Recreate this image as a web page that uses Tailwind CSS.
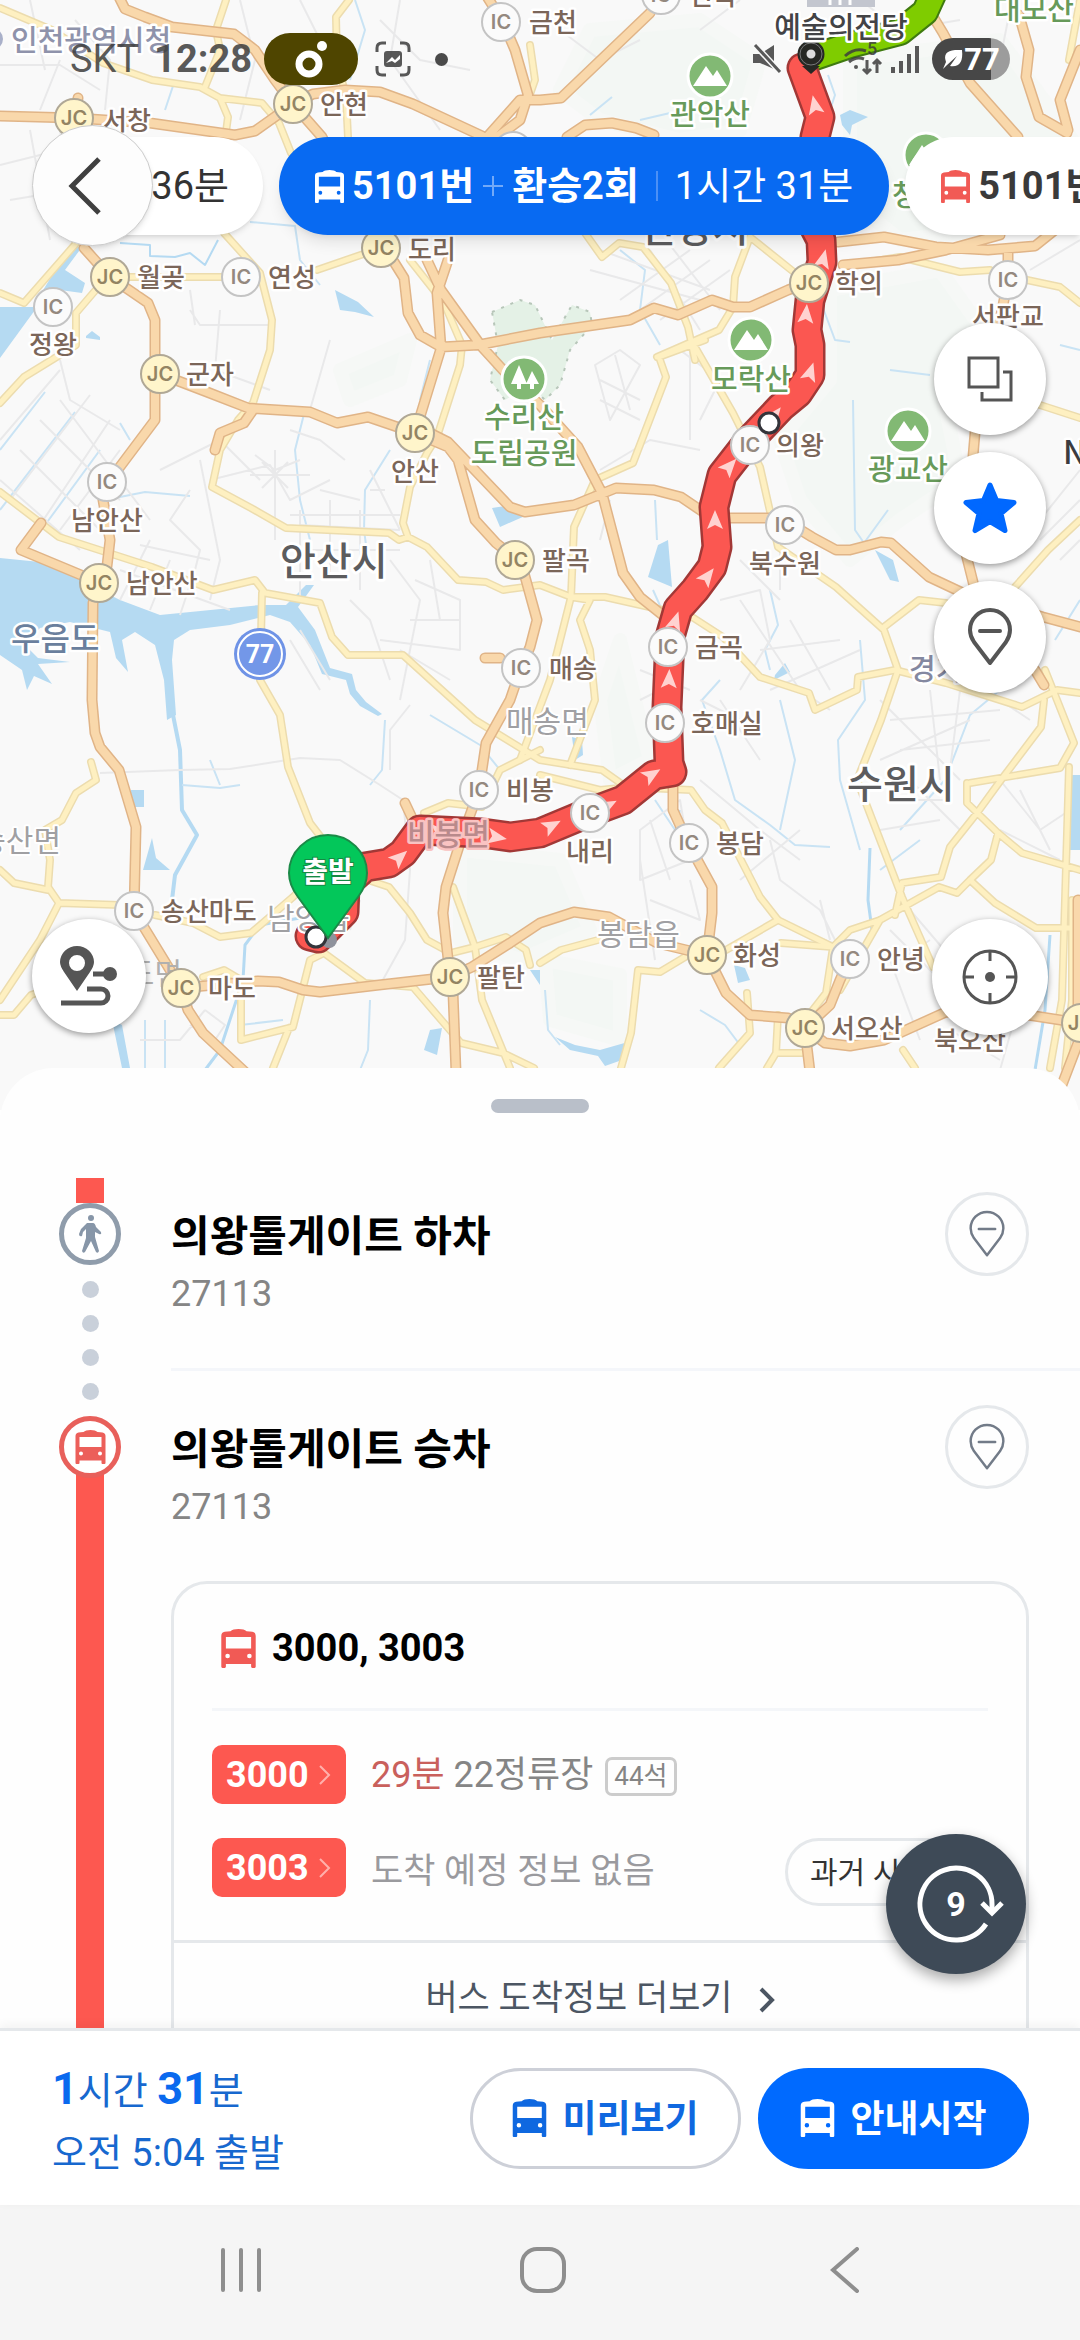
<!DOCTYPE html>
<html lang="ko">
<head>
    <meta charset="UTF-8">
    <meta name="viewport" content="width=device-width, initial-scale=1.0">
    <title>대중교통 길찾기</title>
    <!-- Tailwind CSS -->
    <script src="https://cdn.jsdelivr.net/npm/@tailwindcss/browser@4"></script>
</head>
<body class="h-screen flex flex-col overflow-hidden bg-white text-black font-[Roboto,'Noto_Sans_CJK_KR',sans-serif]">

<!-- Shared icons -->
<svg class="hidden">
    <symbol id="bus" viewBox="0 0 30 34">
        <path fill-rule="evenodd" d="M3 2.500Q5 2 8 2Q10 0 15 0T22 2Q25 2 27 2.500Q30 3 30 6V33Q30 34 29 34H27Q26 34 26 33V30.500H4V33Q4 34 3 34H1Q0 34 0 33V6Q0 3 3 2.500ZM4 7V17H26V7ZM5.500 21.500A2 2 0 1 0 5.500 25.500A2 2 0 1 0 5.500 21.500ZM24.500 21.500A2 2 0 1 0 24.500 25.500A2 2 0 1 0 24.500 21.500Z"/>
    </symbol>
    <symbol id="pin" viewBox="0 0 44 58">
        <path d="M22 55L6 34Q2 28 2 22A20 20 0 0 1 42 22Q42 28 38 34ZM12 23H32" fill="none" stroke="currentColor" stroke-linecap="round" stroke-linejoin="round"/>
    </symbol>
</svg>

<!-- Map -->
<header class="relative shrink-0">
    <svg class="block w-full" viewBox="0 0 1080 1110" font-family="'Noto Sans CJK KR', sans-serif">
        <defs>
            <g id="ic"><circle r="19" fill="#fbfbfb" stroke="#c4c4c4" stroke-width="2"/><text y="7" text-anchor="middle" font-family="Inter, sans-serif" font-size="20" font-weight="600" fill="#94897f">IC</text></g>
            <g id="jc"><circle r="19" fill="#fff5cb" stroke="#b0a896" stroke-width="2"/><text y="7" text-anchor="middle" font-family="Inter, sans-serif" font-size="20" font-weight="600" fill="#938463">JC</text></g>
            <g id="mt"><circle r="22" fill="#82b974" stroke="#fff" stroke-width="3"/><path d="M-17 10L-4 -10L3 0L7 -6L17 10Z" fill="#fff"/></g>
            <path id="ar" d="M0 -11L8 8L0 4L-8 8Z" fill="#ffd2d0"/>
        </defs>
        <rect width="1080" height="1110" fill="#f9f9f9"/>

        <!-- Hills -->
        <g fill="#f3f7f4" stroke="#f6f8f6" stroke-width="14" stroke-linejoin="round">
            <path d="M590 30L700 20L760 60L740 130L680 140L600 120L560 90ZM850 60L1000 40L1080 150V220L900 240L850 200ZM830 290L940 270L990 340L940 380L960 480L900 520L850 560L800 500L780 440L830 380ZM620 640L650 760L610 780L600 700ZM340 370L410 340L400 380L350 400ZM460 850L560 860L590 930L520 960L460 940ZM545 960L620 975L620 1040L550 1020Z"/>
        </g>
        <path d="M492 312L520 300L535 305L552 340L572 305L590 312L592 325L570 350L560 385L545 400L530 385L505 400L490 380L498 345Z" fill="#e4f1e6" stroke="#b7c6b9" stroke-width="2" stroke-dasharray="3 7"/>

        <!-- Water -->
        <g fill="#b5daf2">
            <path d="M0 307H33L69 247H82L65 270L85 283L82 293L60 290L35 310L0 358Z"/>
            <path d="M0 558L40 562L80 580L120 600L160 615L260 605L286 605L306 585H314L298 607L315 630L330 668L352 674L356 690L366 702L382 714L378 716L360 706L350 694L346 680L322 674L310 645L290 622L270 615L230 625L190 630L174 640L172 660L176 715L167 720L164 680L155 645L135 632L122 640L128 672L116 658L110 632L70 622L40 628L25 645L38 658L70 662L38 664L52 684L34 676L27 690L22 670L0 655Z"/>
            <path d="M335 290L358 302L374 317L355 312L340 310ZM840 115L850 110L868 117L852 125L850 135L842 125ZM492 508L512 505L525 516L500 527ZM658 545L668 540L672 587L648 577ZM875 550L893 560L899 582L890 580ZM775 675L785 663L790 672L774 680ZM1070 775H1080V850H1070ZM734 965L745 968L750 980L738 983ZM572 737L582 740L583 755L575 760ZM555 1037L575 1045L600 1050L628 1042L622 1060L605 1066L598 1056L570 1050ZM131 790H144V807H131ZM143 870L152 838L156 858L170 870ZM430 1030L442 1028L437 1055L424 1050ZM86 336L92 331L100 337V340L86 338ZM530 970H540V985ZM112 1020L122 1025L130 1068H122Z"/>
        </g>
        <g fill="none" stroke="#b5daf2" stroke-width="4" stroke-linejoin="round">
            <path d="M170 700L180 750L182 810L197 835L175 875L172 900"/>
            <path d="M300 918L260 925L245 945L243 980L220 1050L205 1070" stroke-width="3"/>
            <path d="M120 243L150 245V256L175 257L190 253L205 265L218 240" stroke-width="2"/>
            <path d="M870 848L868 900L872 930L860 960" stroke-width="3"/>
            <path d="M1050 935L1045 1010L1035 1070" stroke-width="3"/>
        </g>
        <g fill="none" stroke="#c9e3f4" stroke-width="1" stroke-linejoin="round">
            <path d="M355 0L365 30L350 80M175 80L165 110M250 222L295 226L300 260L320 285M45 392L0 450M75 412L0 510M100 450L45 525M120 423L130 440M105 500L145 492L190 496M430 360L420 400M305 410L295 450L300 500L310 540M390 450L365 490L364 530L368 560M620 250L645 270L640 310L660 345M828 75L835 95L830 110M640 120L670 113M590 115L612 97M820 300L835 340L850 342M853 400L855 530L864 543M655 500L657 540M653 590L662 610M770 590L778 625L765 650L770 670M864 543L888 510M720 680L702 700L720 750L735 800L770 825L795 845L830 847M860 640L865 700L838 740L840 780L860 850M780 700L795 760L780 830M655 800L675 830L680 810M210 760L220 785M182 785L220 788L240 785M385 720L382 770L370 785M430 715L480 745L500 770M1080 350L1060 345M890 370L930 375M1000 690L970 715L945 780L900 830M240 1025L283 1020M370 1000L368 1050L360 1070M145 1020V1068M165 1020V1068M545 990L548 1030L560 1045M700 1010L725 1025L740 1045M920 840L880 870M1080 600L1055 640" stroke-width="2"/>
        </g>

        <!-- Streets -->
        <g fill="none" stroke="#e9e9ea" stroke-width="2" stroke-linejoin="round">
            <path d="M0 65H60L100 90M30 0L45 70M60 60L40 110M75 20L110 60L105 110M0 165L60 150M10 200L70 190L110 210M30 130L50 240M60 130L75 230M240 0L255 60L240 120M380 20L420 60L470 70M400 0L390 60L440 130M300 0L320 40M190 310L200 325H270M190 290L195 325M220 310L215 370L270 390M330 340L310 410M60 360L70 400L120 430M60 400L150 520M40 420L120 500M20 450L100 530M0 480L80 550M60 370L0 440M90 395L10 500M110 420L30 540M120 450L60 530"/>
            <path d="M160 470L220 440L260 480M190 490L170 520L200 550L190 590M200 460L220 560L210 600M210 480L270 465L290 500L330 480M255 455L275 470L300 460M275 450V540M250 475H310M262 462L288 488M262 488L288 462M290 430L320 440L345 460M320 490L360 500M300 510V600M330 500V580M360 510V590M280 550H400M290 515H400M300 525L400 530M370 470L385 500L400 530M370 490H385M120 570L230 610M140 545L210 560M120 600L150 540M150 610L170 560M180 615L195 570M390 560L420 600L400 700M415 580L460 600V650L380 640M430 560L440 620M410 620H460M400 650L450 680M350 600L370 620L390 680M290 640L320 690M300 630L330 680"/>
            <path d="M595 365L620 350L640 365L610 420ZM600 380L640 400M615 355L630 410M590 270L700 300M600 250L710 290M620 300L690 250M640 310L710 260M660 320L730 270M650 250L700 330M670 245L720 310M680 350L720 380L700 420M600 470L650 440L700 450M610 500L600 540M690 340V440M640 420L600 400"/>
            <path d="M720 600L760 590L770 640L740 690M740 600L800 690L830 710M760 650L840 640M770 690L860 650M790 620L830 690M740 560L780 600M720 700L760 760M700 700L740 720M640 670L690 690M640 700L660 690M780 540V590M880 700L960 780M890 720L1000 710M900 750L990 740M880 760L970 720M930 690L940 780M960 690L950 770M1000 700L1030 720M910 780L960 830M890 800H950M880 830L940 820M1000 780L1040 830L1070 810M1000 830L1060 860M1020 790L1050 850M640 830L680 800L690 860L640 880ZM650 820L670 880M650 900L700 920L690 880M640 860L655 960M770 840L780 880L820 910L840 950M740 880L800 830M800 930L850 950M820 900L830 940M890 930L960 1000M910 910L970 980M900 960L930 940M890 960L920 1040M700 780L760 830L800 860M1020 1000L1000 1070M950 1030L1000 1060"/>
            <path d="M100 773L180 770L230 769L300 758L340 760L380 785L403 800L410 870L405 940L380 985M205 1010L225 1025L215 1040L190 1025M140 1040H180L205 1010M390 770V730L410 705M360 900L350 930"/>
            <path d="M860 0L900 30L960 20M560 30L600 60L640 40M1010 10L1000 60L970 80M1040 520L1080 470M1040 540L1080 500M1060 560L1080 540M700 30L740 0M1030 270L1080 240"/>
        </g>

        <!-- Roads: minor casing and fill -->
        <g fill="none" stroke="#ecdcae" stroke-width="8" stroke-linejoin="round" stroke-linecap="round">
            <path id="minor" d="M0 8L52 30L103 63L152 80L200 87L220 98L262 103L279 123L291 153M226 0L216 30L220 50L205 87M220 98L228 117L226 132M349 0L336 17L337 60L346 97L348 137M0 293L24 303L79 240M0 403L24 377L76 345V313L100 285M120 277H240M224 233L260 273L272 320L270 350L253 403L238 420L220 450L212 487L251 508L286 528L389 533L399 540L408 537L427 547L458 580L486 582L503 590L540 585L571 597H605L654 608L692 617L723 637L760 677L809 693L815 710L857 690L858 677L895 670L946 683L1022 707L1057 690L1080 693M317 270L381 248M0 492L59 537L152 567L213 590L255 580L265 593L320 603L332 637L348 655H403L475 720L540 760L602 770L626 787L691 790L705 810L722 823L760 897L778 920L833 947M262 593L260 680L280 715L288 767L310 823L327 845M410 260L444 303L462 345L460 365L437 437L427 453L410 487L403 523L408 537"/>
            <path id="minor2" d="M733 413L760 467L778 547L836 587L884 630L898 670L881 720L857 780L902 897L933 967M691 340L733 413M705 340L659 357L666 377L633 463L595 480L574 527L571 597L550 680L520 760M571 597L590 600L580 620L590 650L595 700L570 765M750 237L735 277L733 307L719 330L657 357M585 233L602 257L619 243L643 247L671 283L688 327L695 360M750 237L795 273M884 627L919 600L946 603M1015 587L1048 550L1080 520M1044 700L1041 727L1001 780L977 813L950 847L941 877L902 883L895 915M970 783L1060 768L1074 743L1057 700L1045 670M967 783V803L998 833L1022 853L1080 870M998 833L991 860L970 880L957 893L939 887L880 920L850 930L833 947L826 993L805 1020M970 880L995 903L1036 928H1080M1069 767L1062 1000L1050 1068M1072 900V1000L1065 1068M778 920L726 950M781 943L833 947M685 957L660 972L638 970L631 1033L621 1068M540 963L561 950L609 937M747 993L750 1033L719 1068M778 1015L776 1053L767 1068M776 1053H802M840 990L880 920M850 265L900 257L960 272L990 270M1027 280L1060 287L1080 303M1040 405L1080 418"/>
            <path id="minor3" d="M91 762L96 780L76 793L62 820L45 830L50 860L48 887L59 903L40 940L0 1000M0 870L14 883L48 890M59 903L120 905M155 915L193 923L220 937L251 933L293 897L310 880M0 1015L14 1015L31 995L60 985M203 977L224 970L241 980V1040L293 1027L310 960L324 953M289 1028L273 1068M324 953L365 983L413 987L461 1043L503 1053L534 1068M368 880L389 887L410 913L427 940L451 953L475 947L506 937L526 950L530 965M453 887L475 947L482 1000L510 1068M424 813L448 803L482 807L500 770L540 750M540 775L600 790L630 787M1069 60L1080 0M530 45L535 80L528 100M810 60L835 40M903 1050L915 1068"/>
        </g>
        <g fill="none" stroke="#fef0c1" stroke-width="5" stroke-linejoin="round" stroke-linecap="round">
            <use href="#minor"/>
            <use href="#minor2"/>
            <use href="#minor3"/>
        </g>

        <!-- Roads: motorway casing and fill -->
        <g fill="none" stroke="#e0b487" stroke-width="11" stroke-linejoin="round" stroke-linecap="round">
            <use href="#major"/>
        </g>
        <g fill="none" stroke="#f9d8ab" stroke-width="8" stroke-linejoin="round" stroke-linecap="round">
            <path id="major" d="M118 -5L125 9L145 17L172 27L234 34L255 50L275 80L293 104L322 137L381 248L394 262L404 278L408 313L420 335L441 347L478 345L540 333L630 320L654 308L678 315L712 300L733 307H750L788 290L809 282M0 116L75 118L150 123L235 135L255 131L293 104L313 94L345 90L380 92L413 104L482 136M75 118L78 98M486 -5L503 22L515 50L528 95L520 120L480 150M650 13L561 98L540 100H520L480 145M84 248L110 277L129 290L148 303L155 320V373L155 420L119 468L103 500L110 540L107 566L99 583L93 603L92 700L95 733L100 747L119 770L136 827L134 911L181 988L188 1010L203 1033L245 1072M41 523L21 550L81 575M181 988L258 981L279 982L303 990L320 992L379 985L450 977L443 913L446 887L461 840L479 790L486 743L510 700L521 668L530 647L537 620L524 573L515 558L496 543L475 520L458 460L448 447L415 433L442 345M430 433L448 442L510 507L525 512L574 505L616 488L654 490L681 497L712 518H781L812 537L836 550H850L881 542L891 543L929 577L963 593L1043 617L1080 627M160 374L207 392L248 408L310 412L337 423L368 417L415 433M253 410L244 423L220 433L215 450M427 260L441 290L482 347L503 370L540 405L578 447L602 493L623 573L640 597L665 617M448 260L437 293L441 347M838 242L884 237L936 247L988 250L1035 246L1055 230M843 265L898 260L946 250L1000 235M1008 280V250M1008 280L1003 305L975 433L965 550L975 590M929 10L943 33L970 83L1018 137M1019 15L1029 50L1026 77L1039 117L1067 133M1080 50L1060 100L1068 130M567 137L585 125L612 123L636 128L654 135M673 780V810L688 843L712 887V913L707 955L726 993L750 1015L788 1018L805 1028L830 1005L840 980L850 958M805 1028L825 1043L850 1046L884 1040L946 1012L1028 1015L1080 1023M805 1030L810 1072M707 955L657 943L609 917L574 912L540 923L510 943L472 967L450 977L453 993L456 1072M1078 900V1043L1060 1090M485 658H500M1035 670L1044 685M405 803L413 820"/>
        </g>

        <!-- Route -->
        <g fill="none" stroke-linejoin="round" stroke-linecap="round">
            <path d="M812 58L850 45L900 32L925 12L935 -10" stroke="#3f7a10" stroke-width="28"/>
            <path d="M812 58L850 45L900 32L925 12L935 -10" stroke="#7fcc00" stroke-width="24"/>
            <path id="route" d="M802 68L820 117L815 137L810 180L808 215L821 240L822 262L810 300L807 330L810 345L810 375L798 393L781 407L747 443L722 475L714 507L717 547L712 567L695 590L678 609L670 637L667 707L669 763L672 772L654 775L623 800L588 813L540 833L510 837L482 833L420 830L403 853L389 863L365 867L345 885L344 912L318 938L310 936" stroke="#a23836" stroke-width="31"/>
            <path d="M802 68L820 117L815 137L810 180L808 215L821 240L822 262L810 300L807 330L810 345L810 375L798 393L781 407L747 443L722 475L714 507L717 547L712 567L695 590L678 609L670 637L667 707L669 763L672 772L654 775L623 800L588 813L540 833L510 837L482 833L420 830L403 853L389 863L365 867L345 885L344 912L318 938L310 936" stroke="#fb5751" stroke-width="26"/>
        </g>
        <g>
            <use href="#ar" transform="translate(815 106) rotate(-12)"/>
            <use href="#ar" transform="translate(823 260) rotate(14)"/>
            <use href="#ar" transform="translate(806 315) rotate(5)"/>
            <use href="#ar" transform="translate(810 373) rotate(18)"/>
            <use href="#ar" transform="translate(774 416) rotate(38)"/>
            <use href="#ar" transform="translate(729 467) rotate(42)"/>
            <use href="#ar" transform="translate(715 521)"/>
            <use href="#ar" transform="translate(707 577) rotate(38)"/>
            <use href="#ar" transform="translate(675 622) rotate(18)"/>
            <use href="#ar" transform="translate(669 680) rotate(2)"/>
            <use href="#ar" transform="translate(651 775) rotate(58)"/>
            <use href="#ar" transform="translate(607 806) rotate(62)"/>
            <use href="#ar" transform="translate(551 826) rotate(62)"/>
            <use href="#ar" transform="translate(496 837) rotate(100)"/>
            <use href="#ar" transform="translate(439 832) rotate(90)"/>
            <use href="#ar" transform="translate(399 858) rotate(48)"/>
        </g>

        <!-- Interchanges -->
        <use href="#jc" x="74" y="118"/><use href="#jc" x="293" y="104"/><use href="#ic" x="501" y="22"/><use href="#ic" x="661" y="-5"/>
        <use href="#jc" x="110" y="277"/><use href="#ic" x="241" y="277"/><use href="#jc" x="381" y="248"/><use href="#ic" x="53" y="307"/>
        <use href="#jc" x="809" y="283"/><use href="#ic" x="1008" y="280"/><use href="#jc" x="160" y="374"/><use href="#ic" x="107" y="482"/>
        <use href="#jc" x="99" y="583"/><use href="#jc" x="415" y="433"/><use href="#jc" x="515" y="560"/><use href="#ic" x="521" y="668"/>
        <use href="#ic" x="750" y="445"/><use href="#ic" x="785" y="525"/><use href="#ic" x="668" y="647"/><use href="#ic" x="665" y="723"/>
        <use href="#ic" x="479" y="790"/><use href="#ic" x="590" y="813"/><use href="#ic" x="689" y="843"/><use href="#ic" x="134" y="911"/>
        <use href="#jc" x="450" y="977"/><use href="#jc" x="707" y="955"/><use href="#ic" x="850" y="959"/>
        <use href="#jc" x="805" y="1028"/><use href="#jc" x="1081" y="1023"/><use href="#ic" x="513" y="151"/>

        <!-- Road labels -->
        <g font-size="26" font-weight="500" fill="#7b6659" stroke="#fff" stroke-width="5" stroke-linejoin="round" paint-order="stroke">
            <text x="103" y="130">서창</text><text x="320" y="114">안현</text><text x="529" y="32">금천</text><text x="689" y="5">신속</text>
            <text x="137" y="287">월곶</text><text x="268" y="287">연성</text><text x="408" y="259">도리</text><text x="53" y="354" text-anchor="middle">정왕</text>
            <text x="835" y="293">학의</text><text x="1008" y="326" text-anchor="middle">서판교</text><text x="186" y="384">군자</text>
            <text x="107" y="530" text-anchor="middle">남안산</text><text x="126" y="593">남안산</text><text x="415" y="481" text-anchor="middle">안산</text>
            <text x="542" y="570">팔곡</text><text x="549" y="678">매송</text><text x="776" y="455">의왕</text><text x="785" y="573" text-anchor="middle">북수원</text>
            <text x="695" y="657">금곡</text><text x="691" y="733">호매실</text><text x="506" y="800">비봉</text><text x="590" y="861" text-anchor="middle">내리</text>
            <text x="716" y="853">봉담</text><text x="161" y="921">송산마도</text><text x="208" y="998">마도</text><text x="477" y="987">팔탄</text>
            <text x="733" y="965">화성</text><text x="877" y="969">안녕</text><text x="831" y="1038">서오산</text><text x="970" y="1050" text-anchor="middle">북오산</text>
        </g>
        <!-- Town labels -->
        <g font-size="30" fill="#a0a0a3" stroke="#fff" stroke-width="4" stroke-linejoin="round" paint-order="stroke">
            <text x="61" y="851" text-anchor="end">송산면</text><text x="506" y="732">매송면</text><text x="267" y="929">남양읍</text>
            <text x="597" y="945">봉담읍</text>
        </g>
        <text x="407" y="845" font-size="30" font-weight="500" fill="#b98a8c" stroke="#f9c3c2" stroke-width="5" stroke-linejoin="round" paint-order="stroke">비봉면</text>
        <text x="182" y="984" text-anchor="end" font-size="30" fill="#b0b0b0">마도면</text>
        <use href="#jc" x="181" y="988"/>
        <!-- City labels -->
        <g font-size="39" font-weight="500" fill="#5c5c5e" stroke="#fff" stroke-width="6" stroke-linejoin="round" paint-order="stroke">
            <text x="280" y="575">안산시</text><text x="847" y="798">수원시</text><text x="641" y="242">안양시</text>
        </g>
        <g font-weight="500" stroke="#fff" stroke-width="5" stroke-linejoin="round" paint-order="stroke">
            <text x="11" y="650" font-size="32" fill="#6a7f9d">우음도</text>
            <text x="11" y="51" font-size="29" fill="#8f93ab">인천광역시청</text>
            <text x="909" y="680" font-size="29" fill="#8488a0">경기도</text>
            <text x="1063" y="464" font-size="32" fill="#3c3c3f">N</text>
        </g>
        <circle cx="-8" cy="39" r="11" fill="#a9b0c9"/>
        <path d="M807 0H875V7H807Z" fill="#c3c6cf"/>
        <path d="M830 0V5M840 0V5M850 0V5" stroke="#fff" stroke-width="3"/>
        <!-- Parks -->
        <use href="#mt" x="710" y="76"/><use href="#mt" x="751" y="340"/><use href="#mt" x="908" y="431"/><use href="#mt" x="926" y="155"/>
        <circle cx="524" cy="379" r="22" fill="#82b974" stroke="#fff" stroke-width="3"/>
        <path d="M519 365L527 384H521V389H517V384H511ZM532 371L539 384H534V389H530V384H526Z" fill="#fff"/>
        <g font-size="29" font-weight="500" fill="#679a5a" stroke="#fff" stroke-width="5" stroke-linejoin="round" paint-order="stroke" text-anchor="middle">
            <text x="710" y="125">관악산</text><text x="524" y="428">수리산</text><text x="524" y="464">도립공원</text><text x="751" y="390">모락산</text>
            <text x="908" y="480">광교산</text><text x="1034" y="20">대모산</text><text x="932" y="206">청계산</text>
        </g>
        <!-- Route 77 -->
        <circle cx="260" cy="654" r="26" fill="#6f93e6"/>
        <circle cx="260" cy="654" r="22" fill="#7397e8" stroke="#fff" stroke-width="2"/>
        <text x="260" y="663" text-anchor="middle" font-family="Roboto, sans-serif" font-size="25" font-weight="700" fill="#fff">77</text>

        <!-- Stops -->
        <circle cx="769" cy="423" r="10" fill="#fff" stroke="#34343a" stroke-width="3"/>
        <circle cx="329" cy="940" r="8" fill="#8f929c"/>
        <circle cx="316" cy="937" r="10" fill="#fff" stroke="#34343a" stroke-width="3"/>
        <circle cx="811" cy="54" r="9" fill="#ddd" stroke="#262824" stroke-width="9"/>
        <circle cx="811" cy="54" r="11" fill="none" stroke="#77797a" stroke-width="1"/>
        <path d="M802 66L811 74L820 66Z" fill="#262824"/>
        <text x="841" y="38" text-anchor="middle" font-size="29" font-weight="500" fill="#434346" stroke="#fff" stroke-width="5" stroke-linejoin="round" paint-order="stroke">예술의전당</text>
        <path d="M328 938L298 897Q289 885 289 873A39 38 0 0 1 367 873Q367 885 358 897Z" fill="#03c75a" stroke="#1b8a47" stroke-width="2"/>
        <text x="328" y="882" text-anchor="middle" font-size="28" font-weight="700" fill="#fff" stroke="#148a44" stroke-width="2" paint-order="stroke">출발</text>
    </svg>

    <!-- Status bar -->
    <div class="absolute inset-x-0 top-[30px] h-[58px] flex items-center px-[70px] text-[#3c3c3c]/85">
        <span class="text-[38px] leading-none">SKT</span>
        <span class="ml-[15px] text-[38px] leading-none font-bold">12:28</span>
        <span class="ml-[12px] w-[94px] h-[52px] rounded-full bg-[#4f4500] flex items-center justify-center">
            <svg class="w-[36px] h-[40px]" viewBox="0 0 36 40"><circle cx="16" cy="25" r="10" fill="none" stroke="#fff" stroke-width="7"/><circle cx="29" cy="7" r="5" fill="#fff"/></svg>
        </span>
        <svg class="ml-[17px] w-[36px] h-[36px]" viewBox="0 0 36 36"><path d="M2 11V7Q2 2 7 2H11M25 2H29Q34 2 34 7V11M34 25V29Q34 34 29 34H25M11 34H7Q2 34 2 29V25" fill="none" stroke="currentColor" stroke-width="3"/><rect x="9" y="10" width="18" height="16" rx="3" fill="currentColor"/><path d="M11 22L17 16L20 19L25 14V18L20 22L17 20Z" fill="#fff"/></svg>
        <span class="ml-[24px] size-[13px] rounded-full bg-[#4a4a4a]"></span>
        <svg class="ml-auto w-[30px] h-[32px]" viewBox="0 0 30 32"><path d="M1 11H8L22 2V26L8 20H1Z" fill="currentColor"/><path d="M3 2L28 29" stroke="#f9f9f9" stroke-width="6"/><path d="M3 2L28 29" stroke="currentColor" stroke-width="3"/></svg>
        <svg class="ml-[62px] w-[40px] h-[34px]" viewBox="0 0 40 34"><path d="M1 14Q11 5 22 9M5 20Q12 14 20 17" fill="none" stroke="currentColor" stroke-width="3"/><circle cx="12" cy="25" r="2" fill="currentColor"/><path d="M23 18V31M19 27L23 31L27 27M33 31V18M29 22L33 18L37 22" fill="none" stroke="currentColor" stroke-width="3"/><text x="23" y="13" font-family="Roboto, sans-serif" font-size="18" font-weight="500" fill="currentColor">5</text></svg>
        <svg class="ml-[7px] w-[28px] h-[30px]" viewBox="0 0 28 30"><path d="M2 23V29M10 17V29M18 10V29M26 2V29" stroke="currentColor" stroke-width="4"/></svg>
        <span class="ml-[13px] w-[78px] h-[42px] rounded-full bg-linear-to-r from-[#474747] from-76% to-[#9c9c9c] to-76% flex items-center justify-center text-white">
            <svg class="w-[22px] h-[22px]" viewBox="0 0 22 22"><path d="M4 14Q0 3 13 2H20Q22 20 8 18L15 8L5 17L1 21Z" fill="#fff"/></svg>
            <span class="text-[31px] leading-none font-bold">77</span>
        </span>
    </div>

    <!-- Route options -->
    <nav class="absolute inset-x-0 top-[137px] flex gap-[16px] h-[98px] pl-[92px] text-[38px] whitespace-nowrap">
        <button class="w-[171px] shrink-0 rounded-r-full bg-white pr-[34px] text-right text-[#333] shadow-md">36분</button>
        <button class="shrink-0 rounded-full bg-[#086af2] px-[36px] flex items-center text-white shadow-lg">
            <svg class="w-[29px] h-[33px] mr-[8px] fill-white"><use href="#bus"/></svg>
            <span class="font-bold">5101번</span>
            <svg class="mx-[9px] size-[20px]" viewBox="0 0 20 20"><path d="M10 0V20M0 10H20" stroke="#72a9f8" stroke-width="2"/></svg>
            <span class="font-bold">환승2회</span>
            <span class="mx-[17px] w-[2px] h-[30px] bg-[#4b90f6]"></span>
            <span>1시간 31분</span>
        </button>
        <button class="grow min-w-0 overflow-hidden rounded-l-full bg-white pl-[36px] flex items-center text-[#3a3a3a] shadow-md">
            <svg class="w-[29px] h-[33px] mr-[8px] shrink-0 fill-[#f15a55]"><use href="#bus"/></svg>
            <span class="font-bold">5101번</span>
        </button>
    </nav>
    <button aria-label="뒤로" class="absolute left-[32px] top-[125px] size-[121px] rounded-full bg-[#fdfdfd] border border-[#ccc] shadow-md flex items-center justify-center">
        <svg class="w-[34px] h-[58px] mr-4" viewBox="0 0 34 58"><path d="M31 2L4 29L31 56" fill="none" stroke="#404040" stroke-width="5"/></svg>
    </button>

    <!-- Map tools -->
    <div class="absolute right-[34px] top-[323px] flex flex-col gap-[17px] text-[#555]">
        <button aria-label="지도 종류" class="size-[112px] rounded-full bg-white shadow-[0_2px_6px_#0006] flex items-center justify-center">
            <svg class="w-[46px] h-[46px]" viewBox="0 0 46 46"><path d="M2 2H31V31H2ZM36 16H44V44H15V36" fill="none" stroke="currentColor" stroke-width="3"/></svg>
        </button>
        <button aria-label="즐겨찾기" class="size-[112px] rounded-full bg-white shadow-[0_2px_6px_#0006] flex items-center justify-center">
            <svg class="w-[54px] h-[52px]" viewBox="0 0 54 52"><path d="M27 3L33.500 18.500L51 20.500L38 31.500L42 48.500L27 39.500L12 48.500L16 31.500L3 20.500L20.500 18.500Z" fill="#0068ff" stroke="#0068ff" stroke-width="5" stroke-linejoin="round"/></svg>
        </button>
        <button aria-label="거리뷰" class="size-[112px] rounded-full bg-white shadow-[0_2px_6px_#0006] flex items-center justify-center">
            <svg class="w-[44px] h-[58px]"><use href="#pin" stroke-width="4"/></svg>
        </button>
    </div>
    <div class="absolute inset-x-[32px] bottom-[75px] flex justify-between text-[#555]">
        <button aria-label="경로 보기" class="size-[114px] rounded-full bg-white shadow-[0_2px_6px_#0006] flex items-center justify-center">
            <svg class="w-[58px] h-[60px]" viewBox="0 0 58 60"><path fill-rule="evenodd" d="M17 45L4 26Q0 20 0 16A17 16 0 0 1 34 16Q34 20 30 26ZM17 9A8 8 0 1 0 17 25A8 8 0 1 0 17 9Z" fill="currentColor"/><circle cx="50" cy="28" r="7" fill="currentColor"/><path d="M33 28H46M27 43H41A7 7 0 0 1 41 57H1" fill="none" stroke="currentColor" stroke-width="5"/></svg>
        </button>
        <button aria-label="현재 위치" class="size-[116px] rounded-full bg-white shadow-[0_2px_6px_#0006] flex items-center justify-center">
            <svg class="size-[56px]" viewBox="0 0 56 56"><circle cx="28" cy="28" r="26" fill="none" stroke="currentColor" stroke-width="3"/><circle cx="28" cy="28" r="5" fill="currentColor"/><path d="M28 2V12M28 44V54M2 28H12M44 28H54" stroke="currentColor" stroke-width="3"/></svg>
        </button>
    </div>
</header>

<!-- Bottom sheet -->
<main class="relative grow min-h-0 -mt-[42px] overflow-hidden rounded-t-[54px] bg-[#fefefe]">
    <div class="mx-auto mt-[31px] w-[98px] h-[14px] rounded-full bg-[#b9bfc9]"></div>

    <ul class="mt-[65px]">
        <!-- Get off -->
        <li class="flex h-[238px]">
            <div class="ml-[59px] w-[62px] shrink-0 flex flex-col items-center">
                <span class="w-[28px] h-[25px] bg-[#fd5850]"></span>
                <span class="size-[62px] shrink-0 rounded-full border-5 border-[#8f9cab] bg-white flex items-center justify-center">
                    <svg class="w-[24px] h-[40px]" viewBox="0 0 24 40"><circle cx="13" cy="4" r="3" fill="#8796a8"/><path d="M9 9H15Q17 9 18 13L23 18Q24 21 21 20L17 18V23L21 37Q20 40 18 38L13 27L7 38Q5 40 4 37L8 24V15L5 18L4 22Q1 23 1 20L3 15Z" fill="#8796a8"/></svg>
                </span>
                <span class="mt-[16px] flex flex-col gap-[17px]">
                    <i class="size-[17px] rounded-full bg-[#c9d0da]"></i>
                    <i class="size-[17px] rounded-full bg-[#c9d0da]"></i>
                    <i class="size-[17px] rounded-full bg-[#c9d0da]"></i>
                    <i class="size-[17px] rounded-full bg-[#c9d0da]"></i>
                </span>
            </div>
            <div class="ml-[50px] grow flex justify-between pr-[51px] mb-[45px] border-b-3 border-[#f4f6fa]">
                <div class="pt-[32px]">
                    <h2 class="text-[42px] leading-[54px] font-bold">의왕톨게이트 하차</h2>
                    <p class="mt-[8px] text-[36px] leading-[44px] text-[#858585]">27113</p>
                </div>
                <button aria-label="하차 거리뷰" class="mt-[14px] size-[84px] rounded-full border-3 border-[#e5e8eb] flex items-center justify-center text-[#727b88]">
                    <svg class="w-[36px] h-[48px]"><use href="#pin" stroke-width="3"/></svg>
                </button>
            </div>
        </li>

        <!-- Get on -->
        <li class="flex">
            <div class="ml-[59px] w-[62px] shrink-0 flex flex-col items-center">
                <span class="relative size-[62px] shrink-0 rounded-full border-5 border-[#e8605b] bg-white flex items-center justify-center">
                    <svg class="w-[31px] h-[34px] fill-[#ec5f5a]"><use href="#bus"/></svg>
                </span>
                <span class="-mt-[4px] grow w-[28px] bg-[#fd5850]"></span>
            </div>
            <div class="ml-[50px] mr-[51px] grow">
                <div class="flex justify-between">
                    <div class="pt-[7px]">
                        <h2 class="text-[42px] leading-[54px] font-bold">의왕톨게이트 승차</h2>
                        <p class="mt-[8px] text-[36px] leading-[44px] text-[#858585]">27113</p>
                    </div>
                    <button aria-label="승차 거리뷰" class="-mt-[11px] size-[84px] rounded-full border-3 border-[#e5e8eb] flex items-center justify-center text-[#727b88]">
                        <svg class="w-[36px] h-[48px]"><use href="#pin" stroke-width="3"/></svg>
                    </button>
                </div>

                <!-- Arrivals -->
                <section class="mt-[52px] h-[500px] border-3 border-[#e5e8eb] rounded-[36px]">
                    <div class="mx-[38px] h-[127px] border-b-3 border-[#f4f6f9] flex items-center pl-[9px] pt-[4px]">
                        <svg class="w-[35px] h-[39px] fill-[#f15a55]"><use href="#bus"/></svg>
                        <h3 class="ml-[16px] text-[38px] leading-none font-bold">3000, 3003</h3>
                    </div>
                    <div class="mx-[38px] pt-[34px] flex flex-col gap-[34px]">
                        <div class="flex items-center h-[59px]">
                            <button class="w-[134px] h-[59px] shrink-0 rounded-[10px] bg-[#fd5850] flex items-center pl-[14px] text-[36px] leading-none font-bold text-white">3000
                                <svg class="ml-[10px] w-[12px] h-[20px]" viewBox="0 0 12 20"><path d="M1 1L10 10L1 19" fill="none" stroke="#ffb0ac" stroke-width="2"/></svg>
                            </button>
                            <p class="ml-[25px] text-[36px] leading-none text-[#858585]"><span class="text-[#c9605c]">29분</span> 22정류장</p>
                            <span class="ml-[12px] mt-[4px] h-[39px] rounded-[7px] border-3 border-[#ccc] px-[6px] text-[26px] leading-[32px] text-[#858585]">44석</span>
                        </div>
                        <div class="flex items-center h-[59px]">
                            <button class="w-[134px] h-[59px] shrink-0 rounded-[10px] bg-[#fd5850] flex items-center pl-[14px] text-[36px] leading-none font-bold text-white">3003
                                <svg class="ml-[10px] w-[12px] h-[20px]" viewBox="0 0 12 20"><path d="M1 1L10 10L1 19" fill="none" stroke="#ffb0ac" stroke-width="2"/></svg>
                            </button>
                            <p class="ml-[25px] pt-[8px] text-[35px] leading-none text-[#9a9a9e]">도착 예정 정보 없음</p>
                            <button class="ml-auto mt-[9px] w-[203px] h-[68px] rounded-full border-3 border-[#e5e8eb] pl-[22px] text-left text-[30px] text-[#333]">과거 시간</button>
                        </div>
                    </div>
                    <button class="mt-[43px] w-full h-[116px] border-t-3 border-[#e5e8eb] flex items-center justify-center text-[35px] text-[#4c5663]">
                        버스 도착정보 더보기
                        <svg class="ml-[26px] w-[16px] h-[26px]" viewBox="0 0 16 26"><path d="M2 2L13 13L2 24" fill="none" stroke="currentColor" stroke-width="4"/></svg>
                    </button>
                </section>
            </div>
        </li>
    </ul>

    <!-- Refresh -->
    <button aria-label="새로고침" class="absolute right-[54px] bottom-[54px] size-[140px] rounded-full bg-[#3e4a57] shadow-[0_6px_14px_#0005] flex items-center justify-center">
        <svg class="size-[84px] overflow-visible" viewBox="0 0 84 84"><path d="M72 62A36 36 0 1 1 78 42V50" fill="none" stroke="#fff" stroke-width="5"/><path d="M68 41L78 51L88 41" fill="none" stroke="#fff" stroke-width="5"/><text x="42" y="54" text-anchor="middle" font-family="Roboto, sans-serif" font-size="34" font-weight="700" fill="#fff">9</text></svg>
    </button>
</main>

<!-- Summary and actions -->
<footer class="relative shrink-0 h-[177px] border-t-3 border-[#e5e8eb] bg-white flex items-center pl-[52px] pr-[51px] shadow-[0_-3px_10px_#0000000d]">
    <div class="pt-[6px] text-[38px] text-[#1768cf]">
        <p class="leading-[62px]"><b class="text-[45px] text-[#0a69ee]">1</b>시간 <b class="text-[45px] text-[#0a69ee]">31</b>분</p>
        <p class="leading-[62px]">오전 5:04 출발</p>
    </div>
    <button class="ml-auto w-[271px] h-[101px] rounded-full border-3 border-[#cdd0d8] flex items-center justify-center gap-[15px] text-[37px] font-bold text-[#0f68e0]">
        <svg class="w-[35px] h-[38px] fill-[#0f68e0]"><use href="#bus"/></svg><span class="pt-[4px]">미리보기</span>
    </button>
    <button class="ml-[17px] w-[271px] h-[101px] rounded-full bg-[#006aff] flex items-center justify-center gap-[15px] text-[37px] font-bold text-white">
        <svg class="w-[35px] h-[38px] fill-white"><use href="#bus"/></svg><span class="pt-[4px]">안내시작</span>
    </button>
</footer>

<!-- System navigation -->
<nav class="shrink-0 h-[135px] bg-[#f5f5f5] pl-[90px] pr-[84px] pb-[6px] grid grid-cols-3 items-center justify-items-center">
    <button aria-label="최근 앱"><svg class="w-[42px] h-[46px]" viewBox="0 0 42 46"><path d="M3 3V43M21 3V43M39 3V43" stroke="#8e8e8e" stroke-width="4" stroke-linecap="round"/></svg></button>
    <button aria-label="홈"><svg class="w-[46px] h-[46px]" viewBox="0 0 46 46"><rect x="2" y="2" width="42" height="42" rx="15" fill="none" stroke="#8e8e8e" stroke-width="4"/></svg></button>
    <button aria-label="뒤로 가기"><svg class="w-[30px] h-[46px]" viewBox="0 0 30 46"><path d="M27 2L3 23L27 44" fill="none" stroke="#8e8e8e" stroke-width="4" stroke-linecap="round"/></svg></button>
</nav>
</body>
</html>
